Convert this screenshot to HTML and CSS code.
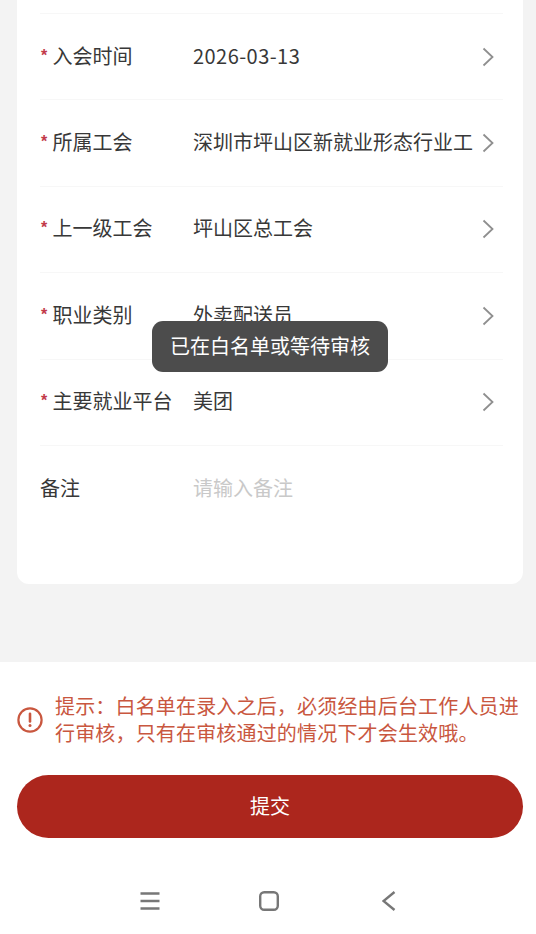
FILE: index.html
```html
<!DOCTYPE html>
<html lang="zh-CN">
<head>
<meta charset="utf-8">
<title>入会信息</title>
<link rel="stylesheet" href="styles.css">
</head>
<body>
<div class="page">
  <main class="card">
    <div class="row">
      <div class="label"><span class="star">*</span>入会时间</div>
      <div class="value num">2026-03-13</div>
      <svg class="chev" viewBox="0 0 12 20"><path d="M1.5 1.5 10.5 10 1.5 18.5"/></svg>
    </div>
    <div class="row">
      <div class="label"><span class="star">*</span>所属工会</div>
      <div class="value">深圳市坪山区新就业形态行业工</div>
      <svg class="chev" viewBox="0 0 12 20"><path d="M1.5 1.5 10.5 10 1.5 18.5"/></svg>
    </div>
    <div class="row">
      <div class="label"><span class="star">*</span>上一级工会</div>
      <div class="value">坪山区总工会</div>
      <svg class="chev" viewBox="0 0 12 20"><path d="M1.5 1.5 10.5 10 1.5 18.5"/></svg>
    </div>
    <div class="row">
      <div class="label"><span class="star">*</span>职业类别</div>
      <div class="value">外卖配送员</div>
      <svg class="chev" viewBox="0 0 12 20"><path d="M1.5 1.5 10.5 10 1.5 18.5"/></svg>
    </div>
    <div class="row">
      <div class="label"><span class="star">*</span>主要就业平台</div>
      <div class="value">美团</div>
      <svg class="chev" viewBox="0 0 12 20"><path d="M1.5 1.5 10.5 10 1.5 18.5"/></svg>
    </div>
    <div class="row row-last">
      <div class="label">备注</div>
      <div class="value placeholder">请输入备注</div>
    </div>
  </main>

  <footer class="footer">
    <div class="tip">
      <svg class="tip-icon" viewBox="0 0 26 26">
        <circle cx="13" cy="13" r="11.6"/>
        <path d="M13 6.8v7.6"/>
        <circle class="dot" cx="13" cy="18.6" r="1.5"/>
      </svg>
      <p class="tip-text">提示：白名单在录入之后，必须经由后台工作人员进行审核，只有在审核通过的情况下才会生效哦。</p>
    </div>
    <button class="submit" type="button">提交</button>
    <nav class="navbar">
      <svg class="nav-menu" viewBox="0 0 20 18"><path d="M0.5 1.5h19M0.5 9h19M0.5 16.5h19"/></svg>
      <svg class="nav-home" viewBox="0 0 20 20"><rect x="1.2" y="1.2" width="17.6" height="17.6" rx="4"/></svg>
      <svg class="nav-back" viewBox="0 0 14 20"><path d="M12.5 1 1.5 10 12.5 19"/></svg>
    </nav>
  </footer>

  <div class="toast">已在白名单或等待审核</div>
</div>
</body>
</html>
```

FILE: styles.css
```css
* { box-sizing: border-box; }
html, body { margin: 0; padding: 0; }
body {
  width: 536px;
  height: 934px;
  overflow: hidden;
  background: #f3f3f3;
  font-family: "Noto Sans CJK SC", "Noto Sans", sans-serif;
  color: #333;
}
.page {
  position: relative;
  width: 536px;
  height: 934px;
  display: flex;
  flex-direction: column;
}
.card {
  height: 584px;
  margin: 0 13px 78px 17px;
  padding: 13px 20px 0 23px;
  background: #fff;
  border-radius: 0 0 12px 12px;
}
.row {
  height: 86.4px;
  display: flex;
  align-items: center;
  border-top: 1px solid #f7f7f7;
  font-size: 20px;
  line-height: 28px;
  color: #383838;
}
.label {
  width: 153px;
  flex: none;
  white-space: nowrap;
  display: flex;
  margin-top: -2px;
}
.star {
  width: 12.5px;
  flex: none;
  padding-left: 1px;
  margin-top: 4px;
  font-family: "Liberation Sans", sans-serif;
  font-size: 16px;
  font-weight: bold;
  line-height: 20px;
  color: #c23a4a;
}
.value {
  width: 280px;
  flex: none;
  white-space: nowrap;
  margin-top: -2px;
}
.num { letter-spacing: 0.45px; }
.placeholder { color: #c9c9c9; }
.chev {
  width: 12px;
  height: 20px;
  margin-left: 9px;
  flex: none;
  fill: none;
  stroke: #8f8f8f;
  stroke-width: 1.8;
}
.footer {
  flex: 1;
  background: #fff;
  padding: 30px 13px 0 17px;
  display: flex;
  flex-direction: column;
}
.tip {
  display: flex;
  align-items: center;
  gap: 12px;
  height: 55px;
  color: #c9573f;
}
.tip-icon {
  width: 26px;
  height: 26px;
  flex: none;
  fill: none;
  stroke: #c9573f;
  stroke-width: 2.2;
}
.tip-icon path { stroke-width: 2.6; stroke-linecap: round; }
.tip-icon .dot { fill: #c9573f; stroke: none; }
.tip-text {
  margin: -2px 0 0;
  width: 468px;
  font-size: 20px;
  line-height: 27px;
  letter-spacing: 0.17px;
}
.submit {
  margin-top: 28px;
  width: 506px;
  height: 63px;
  flex: none;
  border: 0;
  border-radius: 32px;
  background: #ac261d;
  color: #fff;
  font: inherit;
  font-size: 20px;
  padding: 0 0 2px;
}
.navbar {
  margin-top: 52px;
  width: 506px;
  height: 22px;
  display: flex;
  align-items: center;
  padding-left: 123px;
}
.navbar svg { fill: none; stroke: #777; stroke-width: 2.4; flex: none; }
.nav-menu { width: 20px; height: 18px; }
.nav-home { width: 20px; height: 20px; margin-left: 99px; }
.nav-back { width: 14px; height: 20px; margin-left: 103px; stroke-width: 2.2; }
.toast {
  position: absolute;
  left: 152px;
  top: 321px;
  width: 236px;
  height: 51px;
  border-radius: 11px;
  background: #4c4c4c;
  color: #fff;
  font-size: 20px;
  line-height: 49px;
  text-align: center;
}
```
